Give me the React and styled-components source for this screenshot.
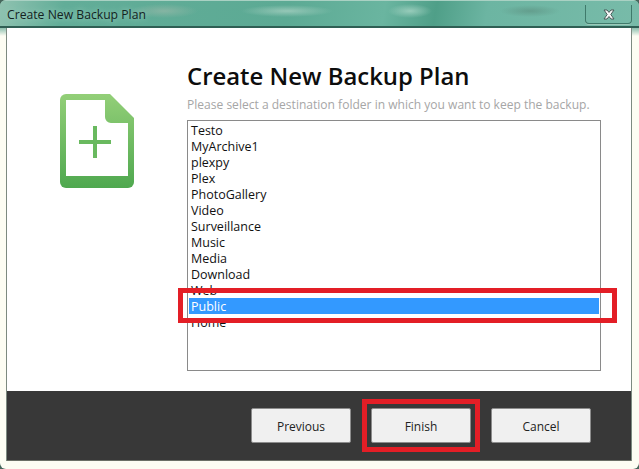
import React from "react";
import styled, { createGlobalStyle } from "styled-components";

const folders = [
  "Testo",
  "MyArchive1",
  "plexpy",
  "Plex",
  "PhotoGallery",
  "Video",
  "Surveillance",
  "Music",
  "Media",
  "Download",
  "Web",
  "Public",
  "Home",
];

const GlobalStyle = createGlobalStyle`
  html, body {
    margin: 0;
    padding: 0;
    background: #46665c;
    overflow: hidden;
  }
  * { box-sizing: border-box; }
`;

const Window = styled.div`
  width: 639px;
  height: 469px;
  display: flex;
  flex-direction: column;
  padding: 0 7px 8px 6px;
  border-radius: 6px;
  overflow: hidden;
  background: linear-gradient(#8dbfae 0, #8dbfae 28px, #fdfdf3 36px);
  font-family: "Open Sans", "Noto Sans", sans-serif;
  color: #1a1a1a;
`;

const TitleBar = styled.div`
  height: 28px;
  flex: none;
  margin: 0 -7px 0 -6px;
  padding: 5px 0 0 7px;
  display: flex;
  justify-content: space-between;
  align-items: flex-start;
  border-top: 1px solid #a9d1c3;
  border-bottom: 2px solid #2f5f54;
  background:
    radial-gradient(ellipse 34px 7px at 164px 10px, #8fb7a6cc, transparent),
    radial-gradient(ellipse 46px 6px at 287px 10px, #a4cfc0cc, transparent),
    radial-gradient(ellipse 22px 7px at 410px 10px, #a6d4c4cc, transparent),
    radial-gradient(ellipse 30px 6px at 530px 10px, #5d9282aa, transparent),
    linear-gradient(100deg, #8fc2b0 0, #62ad98 10%, #5caa94 45%, #6ab5a0 60%, #4f9f88 68%, #6cb5a2 76%, #78bba9 100%);
`;

const TitleText = styled.span`
  font-size: 12.2px;
  line-height: 17px;
  color: #14231f;
  text-shadow: 0 0 6px #a8d8c8;
`;

const CloseButton = styled.div`
  width: 47px;
  height: 19px;
  margin: -1px 7px 0 0;
  display: flex;
  align-items: center;
  justify-content: center;
  border: 1px solid #3f7a6b;
  border-top: none;
  border-radius: 0 0 4px 4px;
  box-shadow: 0 1px 0 #9cc9b9;
`;

const Client = styled.div`
  flex: 1;
  min-height: 0;
  display: flex;
  flex-direction: column;
  background: #fff;
  border-left: 1px solid #7d8a80;
  border-right: 1px solid #7d8a80;
`;

const Body = styled.div`
  flex: 1;
  min-height: 0;
  display: flex;
`;

const IconColumn = styled.div`
  width: 180px;
  flex: none;
  padding: 66px 0 0 53px;
`;

const Content = styled.div`
  flex: 1;
  min-width: 0;
  padding: 31px 30px 0 0;
  display: flex;
  flex-direction: column;
`;

const Heading = styled.h1`
  margin: 0;
  font-size: 23.9px;
  line-height: 34px;
  font-weight: 600;
  color: #0d0d0d;
  white-space: nowrap;
`;

const Subheading = styled.p`
  margin: 3px 0 0;
  font-size: 12.05px;
  line-height: 17px;
  color: #a6a6a6;
  white-space: nowrap;
`;

const FolderList = styled.div`
  margin-top: 7px;
  height: 251px;
  padding: 1px;
  border: 1px solid #8a8a8a;
  display: flex;
  flex-direction: column;
`;

const FolderRow = styled.div`
  position: relative;
  height: 16px;
  flex: none;
  padding-left: 2px;
  font-size: 12.5px;
  line-height: 18px;
  color: ${(p) => (p.$selected ? "#fff" : "#111")};
  background: ${(p) => (p.$selected ? "#3399ff" : "transparent")};
`;

const Callout = styled.span`
  position: absolute;
  top: ${(p) => p.$top}px;
  left: ${(p) => p.$left}px;
  right: ${(p) => p.$right}px;
  bottom: ${(p) => p.$bottom}px;
  border: 5px solid #e31e26;
  z-index: 2;
  pointer-events: none;
`;

const Footer = styled.div`
  height: 70px;
  flex: none;
  display: flex;
  justify-content: flex-end;
  align-items: flex-start;
  gap: 20px;
  padding: 17px 40px 0 0;
  background: #383838;
  border-bottom: 1px solid #6b6f66;
`;

const Button = styled.div`
  position: relative;
  width: 100px;
  height: 35px;
  padding-top: 2px;
  display: flex;
  align-items: center;
  justify-content: center;
  background: #f0f0f0;
  border: 1px solid #8c8c8c;
  border-radius: 2px;
  font-size: 12px;
  color: #222;
`;

const FileIcon = () => (
  <svg width="74" height="94" viewBox="0 0 74 94">
    <defs>
      <linearGradient id="fileFill" x1="0" y1="0" x2="0" y2="1">
        <stop offset="0" stopColor="#93cf78" />
        <stop offset="1" stopColor="#4fa84f" />
      </linearGradient>
    </defs>
    <path
      d="M6 0H50L74 24V88a6 6 0 0 1-6 6H6a6 6 0 0 1-6-6V6a6 6 0 0 1 6-6Z"
      fill="url(#fileFill)"
    />
    <path d="M6 6H45V23a6 6 0 0 0 6 6H68V82H6Z" fill="#fff" />
    <path d="M33 32h4v14h14v4H37v14h-4V50H19v-4h14Z" fill="#69b95f" />
  </svg>
);

const CloseGlyph = () => (
  <svg width="12" height="11" viewBox="0 0 12 11">
    <path
      d="M1 1h3l2 2.400L8 1h3L7.800 5.500 11 10H8L6 7.500 4 10H1l3.200-4.500Z"
      fill="#f7f7f7"
      stroke="#4a5a58"
      strokeWidth="1"
    />
  </svg>
);

export default function App() {
  return (
    <>
      <GlobalStyle />
      <Window>
        <TitleBar>
          <TitleText>Create New Backup Plan</TitleText>
          <CloseButton>
            <CloseGlyph />
          </CloseButton>
        </TitleBar>
        <Client>
          <Body>
            <IconColumn>
              <FileIcon />
            </IconColumn>
            <Content>
              <Heading>Create New Backup Plan</Heading>
              <Subheading>
                Please select a destination folder in which you want to keep the backup.
              </Subheading>
              <FolderList>
                {folders.map((name) => (
                  <FolderRow key={name} $selected={name === "Public"}>
                    {name}
                    {name === "Public" && (
                      <Callout $top={-10} $left={-11} $right={-18} $bottom={-9} />
                    )}
                  </FolderRow>
                ))}
              </FolderList>
            </Content>
          </Body>
          <Footer>
            <Button>Previous</Button>
            <Button>
              Finish
              <Callout $top={-10} $left={-10} $right={-10} $bottom={-10} />
            </Button>
            <Button>Cancel</Button>
          </Footer>
        </Client>
      </Window>
    </>
  );
}
